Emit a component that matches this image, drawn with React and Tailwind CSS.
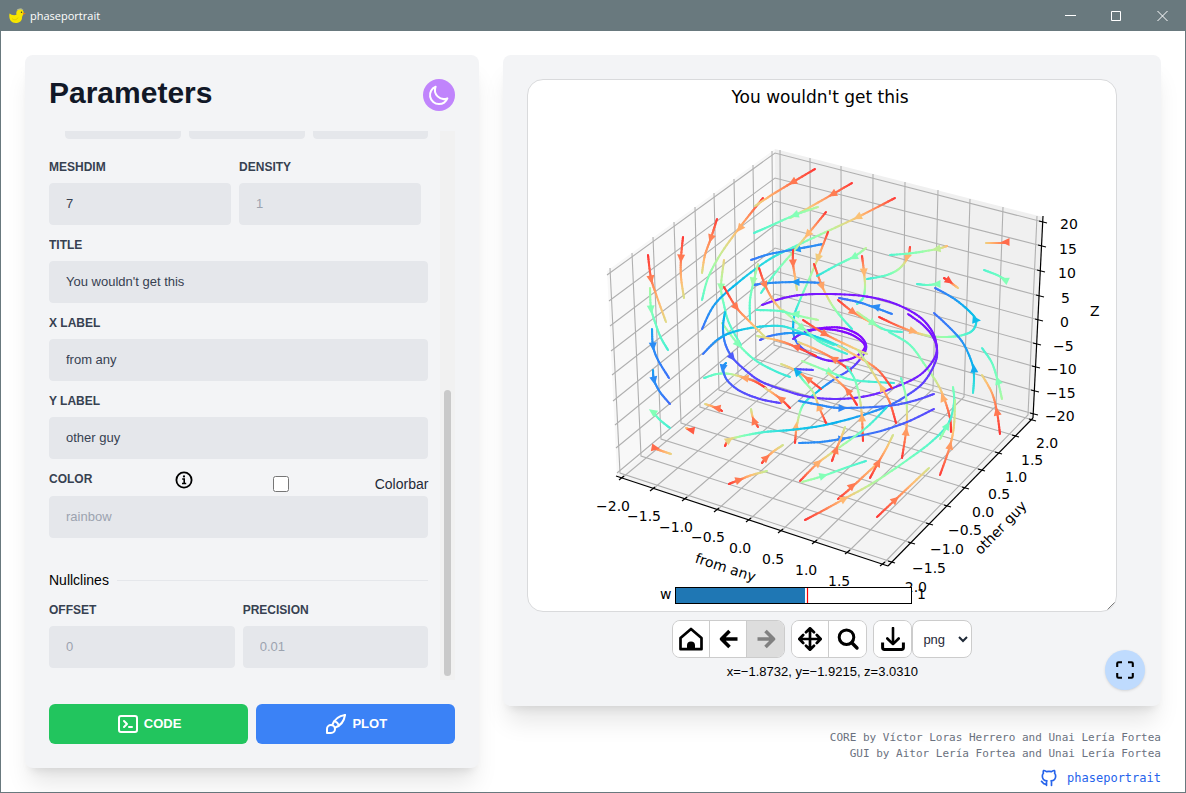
import { TbBrush, TbBrandGithub } from "react-icons/tb";
import { HiOutlineMoon, HiOutlineTerminal } from "react-icons/hi";

/* ---------- 3D stream plot ---------- */

// Speed (0..1) to a rainbow colour, the warm end slightly lightened.
function rainbow(t) {
  const r = Math.min(1, Math.abs(2 * t - 0.5));
  const g = Math.sin(Math.PI * t);
  const b = Math.cos((Math.PI * t) / 2);
  const k = 0.03 + 0.34 * Math.max(0, t - 0.5);
  const lift = (v) => Math.round(255 * (v + (1 - v) * k));
  return `rgb(${lift(r)},${lift(g)},${lift(b)})`;
}

// Streamlines: points are [x, y, speed], the head is [x, y, angle in degrees, speed].
const streams = [
  { p: [[648, 255, 1], [651, 278, 0.9], [657, 297, 0.78], [666, 322, 0.68]], a: [651, 279, 80, 0.87] },
  { p: [[683, 237, 1], [681, 258, 0.88], [681, 277, 0.78], [684, 298, 0.66]], a: [681, 258, 92, 0.88] },
  { p: [[717, 219, 1], [711, 238, 0.86], [705, 255, 0.8], [702, 273, 0.66]], a: [711, 238, 108, 0.86] },
  { p: [[763, 198, 1], [740, 227, 0.77], [720, 255, 0.63], [708, 278, 0.5], [702, 300, 0.42]], a: [740, 228, 128, 0.78] },
  { p: [[650, 288, 0.58], [651, 308, 0.5], [656, 325, 0.45], [661, 338, 0.42], [668, 350, 0.38]], a: [651, 309, 85, 0.5] },
  { p: [[724, 260, 0.72], [721, 287, 0.56], [724, 305, 0.46], [729, 323, 0.42], [741, 345, 0.42]], a: [721, 287, 92, 0.54] },
  { p: [[722, 323, 0.58], [738, 344, 0.5], [755, 360, 0.42], [775, 371, 0.38], [790, 377, 0.36]], a: [738, 344, 48, 0.5] },
  { p: [[895, 198, 1], [858, 217, 0.74], [828, 231, 0.6], [800, 244, 0.45], [770, 259, 0.33], [740, 281, 0.27], [715, 304, 0.21], [702, 329, 0.14]], a: [858, 217, 154, 0.74] },
  { p: [[823, 244, 0.18], [797, 249, 0.18], [770, 254, 0.18], [751, 260, 0.15]], a: [797, 249, 168, 0.2] },
  { p: [[815, 169, 1], [793, 182, 0.9], [770, 196, 0.78], [755, 206, 0.68]], a: [793, 182, 150, 0.88] },
  { p: [[852, 183, 1], [833, 194, 0.88], [803, 211, 0.68], [790, 218, 0.58]], a: [833, 194, 150, 0.87] },
  { p: [[818, 207, 0.62], [795, 215, 0.5], [770, 226, 0.44], [754, 233, 0.4]], a: [795, 215, 160, 0.5] },
  { p: [[826, 212, 1], [808, 234, 0.76], [793, 252, 0.58], [776, 272, 0.45], [761, 293, 0.38]], a: [808, 234, 130, 0.76] },
  { p: [[828, 232, 1], [818, 258, 0.72], [810, 277, 0.55], [800, 300, 0.42], [794, 317, 0.3], [794, 336, 0.18], [802, 348, 0.1], [817, 357, 0.05], [833, 361, 0.02], [853, 358, 0], [865, 347, 0], [856, 337, 0], [840, 331, 0], [820, 329, 0], [803, 333, 0.02], [793, 339, 0.05]], a: [818, 258, 110, 0.72] },
  { p: [[805, 331, 0.03], [822, 328, 0], [842, 328, 0], [860, 336, 0], [866, 349, 0.03], [853, 367, 0.08], [833, 380, 0.14], [817, 392, 0.26], [803, 405, 0.42], [797, 425, 0.72], [795, 443, 1]], a: [796, 427, -85, 0.76] },
  { p: [[793, 250, 1], [793, 263, 0.9], [795, 277, 0.76], [797, 290, 0.65]], a: [793, 263, 88, 0.88] },
  { p: [[823, 283, 0.17], [796, 282, 0.18], [770, 283, 0.18], [753, 285, 0.15]], a: [796, 282, 180, 0.2] },
  { p: [[814, 264, 1], [822, 286, 0.8], [832, 305, 0.6], [842, 318, 0.45], [852, 329, 0.37]], a: [822, 286, 68, 0.8] },
  { p: [[862, 256, 1], [864, 272, 0.76], [865, 287, 0.6], [863, 298, 0.45], [857, 304, 0.38]], a: [864, 272, 86, 0.76] },
  { p: [[866, 248, 0.62], [855, 256, 0.5], [837, 265, 0.42], [817, 276, 0.33]], a: [854, 257, 152, 0.5] },
  { p: [[910, 247, 1], [908, 257, 0.78], [900, 268, 0.6], [887, 275, 0.45], [867, 279, 0.36]], a: [907, 257, 110, 0.77] },
  { p: [[947, 246, 0.78], [937, 249, 0.62], [913, 253, 0.5], [890, 255, 0.4]], a: [937, 249, 170, 0.62] },
  { p: [[986, 243, 0.7], [996, 243, 0.8], [1007, 243, 0.92]], a: [1006, 242, 180, 0.9] },
  { p: [[984, 270, 0.4], [997, 275, 0.45], [1006, 280, 0.5]], a: [1005, 280, 205, 0.5] },
  { p: [[944, 278, 1], [950, 282, 0.92], [958, 288, 0.7]], a: [949, 281, 35, 0.95] },
  { p: [[917, 284, 0.38], [927, 285, 0.44], [938, 284, 0.5]], a: [937, 284, 180, 0.5] },
  { p: [[935, 288, 0.14], [953, 298, 0.19], [968, 310, 0.25], [976, 320, 0.28], [973, 330, 0.35], [963, 335, 0.42], [947, 337, 0.52], [930, 336, 0.6], [914, 332, 0.76], [896, 325, 0.9], [879, 317, 1]], a: [976, 320, 5, 0.26], b: [913, 331, 14, 0.78] },
  { p: [[934, 313, 0.14], [950, 328, 0.16], [963, 343, 0.19], [972, 363, 0.24], [974, 377, 0.3], [973, 393, 0.36]], a: [974, 369, -95, 0.23] },
  { p: [[982, 348, 0.38], [992, 363, 0.44], [998, 382, 0.5], [1002, 399, 0.58]], a: [998, 381, -108, 0.5] },
  { p: [[982, 375, 0.68], [992, 393, 0.8], [997, 412, 0.9], [1000, 434, 1]], a: [997, 412, -102, 0.88] },
  { p: [[839, 298, 0.13], [858, 302, 0.16], [876, 308, 0.18], [892, 314, 0.16]], a: [876, 307, 196, 0.18] },
  { p: [[838, 300, 1], [853, 312, 0.87], [870, 322, 0.75], [882, 329, 0.62]], a: [853, 312, 35, 0.86] },
  { p: [[857, 312, 0.66], [873, 323, 0.5], [886, 330, 0.42], [902, 332, 0.38]], a: [873, 323, 30, 0.52] },
  { p: [[889, 332, 0.42], [910, 345, 0.45], [925, 365, 0.52], [937, 383, 0.65], [944, 398, 0.78], [950, 418, 0.95], [951, 432, 1]], a: [943, 398, -112, 0.78] },
  { p: [[762, 305, 0.03], [780, 299, 0.02], [800, 295, 0.02], [827, 294, 0.02], [863, 296, 0.02], [893, 303, 0.02], [917, 315, 0.02], [930, 328, 0.02], [936, 342, 0.02], [935, 357, 0.03], [920, 375, 0.03], [893, 388, 0.04], [867, 396, 0.04], [837, 399, 0.05], [810, 397, 0.06], [790, 392, 0.07], [762, 382, 0.08], [744, 369, 0.09], [732, 357, 0.11], [725, 343, 0.15], [723, 327, 0.21], [725, 312, 0.28]], a: [732, 357, 52, 0.11] },
  { p: [[908, 314, 0.01], [923, 325, 0.02], [933, 337, 0.02], [937, 349, 0.03], [935, 363, 0.05], [923, 383, 0.07], [903, 398, 0.11], [883, 408, 0.17], [853, 418, 0.22], [820, 426, 0.26], [790, 430, 0.29], [765, 432, 0.38], [742, 436, 0.5], [729, 440, 0.76], [725, 446, 1]], a: [729, 440, -35, 0.7] },
  { p: [[703, 354, 0.14], [717, 340, 0.2], [733, 332, 0.26], [757, 327, 0.3], [780, 326, 0.33], [795, 330, 0.37], [815, 338, 0.4], [834, 345, 0.38]] },
  { p: [[760, 340, 0.1], [770, 336, 0.14], [790, 333, 0.2], [810, 335, 0.27], [830, 342, 0.34], [847, 350, 0.38]] },
  { p: [[759, 268, 1], [765, 285, 0.87], [773, 300, 0.78], [783, 312, 0.66]], a: [765, 285, 65, 0.86] },
  { p: [[783, 310, 0.64], [802, 327, 0.5], [820, 342, 0.42], [847, 354, 0.36]], a: [802, 328, 40, 0.52] },
  { p: [[758, 264, 0.64], [754, 280, 0.52], [750, 300, 0.45], [750, 320, 0.38]], a: [753, 281, 100, 0.55] },
  { p: [[724, 287, 1], [736, 307, 0.88], [747, 319, 0.8], [765, 337, 0.65]], a: [736, 307, 52, 0.88] },
  { p: [[756, 310, 0.4], [780, 311, 0.43], [795, 315, 0.5], [818, 320, 0.6]], a: [796, 314, 188, 0.5] },
  { p: [[652, 329, 0.22], [653, 346, 0.18], [658, 360, 0.17], [669, 378, 0.14]], a: [653, 346, 86, 0.18] },
  { p: [[653, 370, 0.22], [654, 380, 0.18], [660, 392, 0.17], [670, 404, 0.13]], a: [654, 380, 78, 0.18] },
  { p: [[653, 412, 0.5], [660, 420, 0.42], [670, 428, 0.38]], a: [653, 412, 215, 0.5] },
  { p: [[653, 448, 0.92], [662, 451, 0.8], [671, 454, 0.7]], a: [655, 448, 10, 0.9] },
  { p: [[686, 428, 0.7], [691, 430, 0.93]], a: [691, 430, 190, 0.93] },
  { p: [[705, 404, 0.66], [717, 408, 0.88], [722, 411, 0.98]], a: [717, 408, 190, 0.88] },
  { p: [[751, 409, 0.62], [753, 418, 0.76], [758, 427, 0.96]], a: [754, 421, -112, 0.88] },
  { p: [[729, 484, 1], [739, 480, 0.88], [752, 475, 0.75], [767, 471, 0.62]], a: [739, 480, -18, 0.88] },
  { p: [[762, 463, 1], [766, 458, 0.88], [774, 451, 0.75], [783, 445, 0.65]], a: [766, 458, -42, 0.88] },
  { p: [[704, 378, 0.4], [717, 374, 0.45], [730, 374, 0.56], [745, 378, 0.8], [756, 382, 0.92], [766, 388, 1]], a: [745, 378, 190, 0.8] },
  { p: [[726, 363, 0.22], [723, 368, 0.17], [727, 380, 0.12], [740, 391, 0.1], [760, 399, 0.08], [780, 403, 0.08]], a: [723, 368, 100, 0.18] },
  { p: [[757, 336, 0.62], [780, 341, 0.8], [796, 347, 0.92], [816, 356, 1]], a: [796, 347, 196, 0.9] },
  { p: [[765, 388, 0.65], [774, 394, 0.8], [782, 400, 0.9], [790, 408, 1]], a: [781, 399, 216, 0.86] },
  { p: [[794, 369, 0.1], [813, 370, 0.08]] },
  { p: [[781, 364, 0.65], [795, 370, 0.75], [808, 379, 0.88], [821, 389, 1]], a: [808, 379, 214, 0.86] },
  { p: [[795, 369, 0.25], [803, 380, 0.45], [813, 392, 0.6], [819, 407, 0.78], [826, 423, 1]], a: [819, 407, -110, 0.78], b: [797, 372, -130, 0.24] },
  { p: [[802, 361, 0.58], [830, 372, 0.48], [853, 380, 0.42], [894, 383, 0.34]], a: [830, 372, 22, 0.5] },
  { p: [[828, 373, 0.65], [838, 381, 0.78], [848, 391, 0.88], [857, 405, 1]], a: [848, 391, -130, 0.87] },
  { p: [[798, 342, 0.66], [815, 349, 0.78], [834, 359, 0.9], [851, 371, 1]], a: [834, 359, 206, 0.86] },
  { p: [[803, 320, 1], [825, 334, 0.88], [847, 345, 0.75], [867, 354, 0.65]], a: [825, 334, 30, 0.88] },
  { p: [[838, 346, 0.68], [860, 358, 0.76], [878, 370, 0.88], [892, 388, 1]] },
  { p: [[847, 367, 0.35], [855, 380, 0.45], [860, 400, 0.62], [862, 418, 0.78], [863, 441, 1]], a: [862, 418, -93, 0.78] },
  { p: [[858, 350, 0.6], [870, 368, 0.66], [882, 388, 0.74], [890, 403, 0.88], [896, 423, 1]], a: [882, 388, -118, 0.74] },
  { p: [[901, 378, 0.42], [906, 397, 0.55], [907, 417, 0.7], [906, 432, 0.82], [902, 458, 1]], a: [906, 432, -84, 0.82] },
  { p: [[799, 401, 0.18], [820, 405, 0.18], [841, 408, 0.17], [887, 406, 0.13], [913, 401, 0.1], [934, 394, 0.08]], a: [842, 408, 2, 0.17] },
  { p: [[799, 443, 0.18], [820, 442, 0.18], [841, 439, 0.17], [877, 432, 0.14], [907, 422, 0.11], [934, 409, 0.08]], a: [842, 439, -8, 0.17] },
  { p: [[800, 481, 1], [818, 463, 0.78], [840, 447, 0.6], [867, 427, 0.42], [887, 407, 0.3]], a: [818, 463, -42, 0.78] },
  { p: [[802, 482, 0.6], [823, 476, 0.5], [845, 468, 0.44], [866, 461, 0.38]], a: [823, 476, -16, 0.5] },
  { p: [[832, 461, 1], [836, 450, 0.88], [841, 438, 0.76], [845, 427, 0.64]], a: [836, 450, -70, 0.87] },
  { p: [[838, 499, 1], [852, 487, 0.88], [866, 474, 0.8], [878, 463, 0.74]], a: [852, 486, -42, 0.88] },
  { p: [[870, 478, 1], [878, 463, 0.88], [886, 449, 0.76], [893, 435, 0.65]], a: [878, 463, -62, 0.87] },
  { p: [[805, 520, 1], [824, 510, 0.88], [844, 499, 0.76], [873, 483, 0.6], [903, 463, 0.48], [930, 443, 0.42], [948, 424, 0.36], [954, 403, 0.42], [953, 387, 0.5]], a: [844, 499, -29, 0.76] },
  { p: [[877, 517, 1], [895, 500, 0.88], [912, 484, 0.76], [929, 468, 0.65]], a: [895, 500, -42, 0.87] },
  { p: [[940, 475, 1], [950, 446, 0.82], [954, 425, 0.7], [955, 400, 0.58]], a: [950, 446, -78, 0.82] },
  { p: [[940, 439, 0.58], [948, 424, 0.46]], a: [947, 426, -60, 0.46] },
];

// Catmull-Rom samples through the control points, speed interpolated alongside.
function sample(pts) {
  const out = [];
  const n = 8;
  for (let i = 0; i < pts.length - 1; i++) {
    const a = pts[Math.max(0, i - 1)];
    const b = pts[i];
    const c = pts[i + 1];
    const d = pts[Math.min(pts.length - 1, i + 2)];
    for (let k = 0; k < n; k++) {
      const t = k / n;
      const f = (j) =>
        0.5 * (2 * b[j] + (c[j] - a[j]) * t + (2 * a[j] - 5 * b[j] + 4 * c[j] - d[j]) * t * t + (3 * b[j] - a[j] - 3 * c[j] + d[j]) * t * t * t);
      out.push([f(0), f(1), b[2] + (c[2] - b[2]) * t]);
    }
  }
  out.push(pts[pts.length - 1]);
  return out;
}

function Head({ at }) {
  return (
    <path d="M5 0L-3.500 4V-4Z" fill={rainbow(at[3])} transform={`translate(${at[0]} ${at[1]}) rotate(${at[2]})`} />
  );
}

function Stream({ s }) {
  const q = sample(s.p);
  return (
    <g>
      {q.slice(1).map((c, i) => (
        <line key={i} x1={q[i][0]} y1={q[i][1]} x2={c[0]} y2={c[1]} stroke={rainbow((q[i][2] + c[2]) / 2)} strokeWidth="2.1" strokeLinecap="round" />
      ))}
      {s.a && <Head at={s.a} />}
      {s.b && <Head at={s.b} />}
    </g>
  );
}

const leftTop = [[610, 268], [632, 253], [653, 237], [674, 222], [695, 207], [714, 193], [734, 179], [753, 165], [772, 151]];
const leftBottom = [[620, 473], [641, 456], [661, 439], [681, 423], [700, 407], [719, 390], [738, 375], [756, 359], [774, 345]];
const rightTop = [[780, 150], [810, 158], [841, 166], [873, 174], [905, 182], [938, 190], [970, 199], [1003, 207], [1037, 216]];
const rightBottom = [[781, 346], [811, 355], [842, 363], [872, 372], [903, 380], [933, 389], [964, 397], [996, 406], [1028, 415]];
const xTicks = [[622, 478], [653, 489], [685, 499], [717, 510], [749, 520], [781, 531], [815, 542], [848, 552], [883, 564]];
const yTicks = [[892, 562], [912, 543], [930, 524], [948, 506], [966, 488], [982, 470], [999, 453], [1016, 436], [1033, 420]];
const zLeft = [[607, 275], [609, 301], [610, 326], [611, 351], [612, 375], [613, 401], [615, 425], [616, 448], [617, 473]];
const zBack = [153, 178, 201, 225, 248, 271, 294, 317, 341];
const zTicks = [[1043, 222], [1042, 246], [1041, 271], [1040, 296], [1039, 320], [1037, 344], [1036, 367], [1035, 391], [1034, 414]];

const tickLabels = [
  ["−2.0", 596, 511], ["−1.5", 627, 521], ["−1.0", 659, 532], ["−0.5", 691, 542], ["0.0", 729, 553], ["0.5", 762, 564], ["1.0", 795, 575], ["1.5", 828, 586], ["2.0", 862, 598],
  ["2.0", 1036, 448], ["1.5", 1021, 465], ["1.0", 1005, 482], ["0.5", 988, 499], ["0.0", 972, 517], ["−0.5", 948, 535], ["−1.0", 930, 554], ["−1.5", 912, 573], ["−2.0", 893, 592],
  ["20", 1060, 229], ["15", 1059, 254], ["10", 1058, 278], ["5", 1061, 303], ["0", 1060, 327], ["−5", 1053, 351], ["−10", 1047, 374], ["−15", 1046, 398], ["−20", 1045, 421],
];

function Plot() {
  return (
    <svg viewBox="528 80 588 531" className="block h-auto w-full font-['DejaVu_Sans',sans-serif] text-[14px]" role="img" aria-label="Phase portrait">
      <polygon points="607,271 775,149 776,342 617,476" fill="#f8f8f8" />
      <polygon points="775,149 1043,217 1033,418 776,342" fill="#f0f0f0" />
      <polygon points="617,476 776,342 1033,418 888,566" fill="#f4f4f4" />
      <g stroke="#b0b0b0" strokeWidth="1.1" fill="none">
        {leftTop.map((p, i) => (
          <polyline key={i} points={`${p} ${leftBottom[i]} ${yTicks[i]}`} />
        ))}
        {rightTop.map((p, i) => (
          <polyline key={i} points={`${p} ${rightBottom[i]} ${xTicks[i]}`} />
        ))}
        {zLeft.map((p, i) => (
          <polyline key={i} points={`${p} 775,${zBack[i]} ${zTicks[i]}`} />
        ))}
      </g>
      <g stroke="#000" strokeWidth="1.2">
        <line x1="616" y1="476" x2="888" y2="566" />
        <line x1="888" y1="566" x2="1033" y2="418" />
        <line x1="1033" y1="418" x2="1043" y2="216" />
        {xTicks.map(([x, y], i) => (
          <line key={i} x1={x - 3} y1={y + 2} x2={x + 2} y2={y - 2} />
        ))}
        {yTicks.map(([x, y], i) => (
          <line key={i} x1={x - 4} y1={y - 1} x2={x + 3} y2={y + 1} />
        ))}
        {zTicks.map(([x, y], i) => (
          <line key={i} x1={x - 4} y1={y - 1} x2={x + 4} y2={y + 1} />
        ))}
      </g>
      {streams.map((s, i) => (
        <Stream key={i} s={s} />
      ))}
      {tickLabels.map(([t, x, y], i) => (
        <text key={i} x={x} y={y}>{t}</text>
      ))}
      <text x="1090" y="316">Z</text>
      <text textAnchor="middle" transform="translate(724 572) rotate(18)">from any</text>
      <text textAnchor="middle" transform="translate(1004 531) rotate(-46)">other guy</text>
      <text x="820" y="103" textAnchor="middle" fontSize="17">You wouldn't get this</text>
      <rect x="675.500" y="587.500" width="236" height="16" fill="#fff" />
      <rect x="675.500" y="587.500" width="129.500" height="16" fill="#1f77b4" />
      <line x1="807.500" y1="587" x2="807.500" y2="604" stroke="#f00" strokeWidth="1.2" />
      <rect x="675.500" y="587.500" width="236" height="16" fill="none" stroke="#000" />
      <text x="660" y="599">w</text>
      <text x="917" y="599">1</text>
    </svg>
  );
}

/* ---------- icons ---------- */

function DuckIcon() {
  return (
    <svg viewBox="0 0 17 16" className="h-4 w-[17px]" aria-hidden="true">
      <path d="M.5 5.500C2 6.500 4.500 8 7.500 6.800C6.700 4 8 1.500 11 1.300C14 1.200 15 3.500 14.500 5.500C14 7.500 13 8 13 10C13 13 10 15 6.500 15C2 15-.5 11 .5 5.500Z" fill="#f7e600" />
      <path d="M7.500 2.500C8.500.3 12.500-.4 14.500 2C12 1.300 9.500 1.500 7.500 2.500Z" fill="#c9c9a0" />
      <path d="M13.800 4.500L17 5.500L14 6.800Z" fill="#f0761a" />
      <circle cx="12.500" cy="4.300" r=".7" fill="#333" />
      <path d="M3 10.500C5 12.500 8 12 9 9.500" fill="none" stroke="#d9c400" strokeWidth=".8" />
    </svg>
  );
}

function InfoIcon() {
  return (
    <svg viewBox="0 0 18 18" className="h-[18px] w-[18px]" fill="none" stroke="#000" aria-hidden="true">
      <circle cx="9" cy="9" r="7.600" strokeWidth="1.800" />
      <path d="M7.200 8H9.200V12.500M7 12.500H11.200" strokeWidth="1.600" />
      <circle cx="9" cy="5.400" r="1.100" fill="#000" stroke="none" />
    </svg>
  );
}

function HomeIcon() {
  return (
    <svg viewBox="0 0 24 24" className="h-6 w-6" aria-hidden="true">
      <path d="M1.500 11L12 2L22.500 11V22.200H1.500Z" fill="none" stroke="#000" strokeWidth="2.700" strokeLinejoin="round" />
      <path d="M8 22V18.500A4 4 0 0 1 16 18.500V22Z" fill="#000" />
    </svg>
  );
}

function ArrowIcon({ right }) {
  return (
    <svg viewBox="0 0 24 24" className="h-6 w-6" fill="none" stroke="currentColor" strokeWidth="3.600" strokeLinejoin="round" aria-hidden="true">
      {right ? <path d="M3.500 12H19M11.500 4L19.500 12L11.500 20" /> : <path d="M21.500 12H6M13.500 4L5.500 12L13.500 20" />}
    </svg>
  );
}

function MoveIcon() {
  return (
    <svg viewBox="0 0 24 24" className="h-6 w-6" fill="none" stroke="#000" strokeWidth="2.700" strokeLinecap="round" strokeLinejoin="round" aria-hidden="true">
      <path d="M12 2V22M2 12H22M8 5.200L12 1.300L16 5.200M8 18.800L12 22.700L16 18.800M5.200 8L1.300 12L5.200 16M18.800 8L22.700 12L18.800 16" />
    </svg>
  );
}

function ZoomIcon() {
  return (
    <svg viewBox="0 0 24 24" className="h-6 w-6" fill="none" stroke="#000" aria-hidden="true">
      <circle cx="10.500" cy="10.200" r="7.300" strokeWidth="3" />
      <path d="M15.800 15.800L21 21" strokeWidth="3.400" strokeLinecap="round" />
    </svg>
  );
}

function SaveIcon() {
  return (
    <svg viewBox="0 0 24 24" className="h-6 w-6" fill="none" stroke="#000" strokeLinejoin="round" aria-hidden="true">
      <path d="M12 1V17M6.300 11.500L12 17.200L17.700 11.500" strokeWidth="2.600" strokeLinecap="round" />
      <path d="M1.600 15.500V20.500Q1.600 22.400 3.500 22.400H20.500Q22.400 22.400 22.400 20.500V15.500" strokeWidth="3" />
    </svg>
  );
}

function ExpandIcon() {
  return (
    <svg viewBox="0 0 20 20" className="h-5 w-5" fill="none" stroke="#000" strokeWidth="2.100" aria-hidden="true">
      <path d="M2.200 7V3.500Q2.200 2.200 3.500 2.200H7M13 2.200H16.500Q17.800 2.200 17.800 3.500V7M17.800 13V16.500Q17.800 17.800 16.500 17.800H13M7 17.800H3.500Q2.200 17.800 2.200 16.500V13" />
    </svg>
  );
}

/* ---------- form ---------- */

const inputClass = "block h-[42px] w-full rounded border border-[#e5e7eb] bg-[#e5e7eb] px-4 pb-0.5 text-[13px] text-[#374151] placeholder-[#9ca3af] outline-none";
const labelClass = "mb-2 block text-xs font-bold uppercase text-[#374151]";

function Field({ id, label, value, placeholder, className = "" }) {
  return (
    <div className={className}>
      <label htmlFor={id} className={labelClass}>{label}</label>
      <input id={id} type="text" defaultValue={value} placeholder={placeholder} className={inputClass} />
    </div>
  );
}

function Parameters() {
  return (
    <section className="flex w-2/5 flex-col rounded-lg bg-[#f3f4f6] p-6 shadow-xl">
      <div className="flex h-[52px] shrink-0 items-start justify-between">
        <h1 className="text-[30px] leading-7 font-bold text-[#111827]">Parameters</h1>
        <button type="button" aria-label="Dark mode" className="flex h-8 w-8 items-center justify-center rounded-full bg-[#c084fc] text-white">
          <HiOutlineMoon className="h-6 w-6" />
        </button>
      </div>
      <div className="flex min-h-0 flex-1">
        <form className="flex min-w-0 flex-1 flex-col justify-end overflow-hidden pr-3 pb-3">
          <div className="mb-5 grid shrink-0 grid-cols-3 gap-2 pl-4">
            <input aria-label="Minimum" className={inputClass} />
            <input aria-label="Maximum" className={inputClass} />
            <input aria-label="Steps" className={inputClass} />
          </div>
          <div className="mb-3 flex shrink-0 gap-2">
            <Field id="meshdim" label="Meshdim" value="7" className="w-[48%]" />
            <Field id="density" label="Density" placeholder="1" className="w-[48%]" />
          </div>
          <Field id="title" label="Title" value="You wouldn't get this" className="mb-3 shrink-0" />
          <Field id="xlabel" label="X label" value="from any" className="mb-3 shrink-0" />
          <Field id="ylabel" label="Y label" value="other guy" className="mb-3 shrink-0" />
          <div className="mb-8 shrink-0">
            <div className="flex h-[25px] items-start justify-between">
              <div className="flex w-36 items-start justify-between">
                <label htmlFor="color" className="text-xs font-bold text-[#374151] uppercase">Color</label>
                <button type="button" aria-label="Color help" className="flex"><InfoIcon /></button>
              </div>
              <div className="flex h-[25px] w-[155px] items-center justify-between">
                <input id="colorbar" type="checkbox" className="h-4 w-4" />
                <label htmlFor="colorbar" className="text-sm text-[#1f2937]">Colorbar</label>
              </div>
            </div>
            <input id="color" type="text" placeholder="rainbow" className={inputClass} />
          </div>
          <div className="mb-3 flex shrink-0 items-center gap-2">
            <h2 className="text-sm text-black">Nullclines</h2>
            <hr className="flex-1 border-[#e5e7eb]" />
          </div>
          <div className="grid shrink-0 grid-cols-2 gap-2">
            <Field id="offset" label="Offset" placeholder="0" />
            <Field id="precision" label="Precision" placeholder="0.01" />
          </div>
        </form>
        <div className="flex w-[15px] shrink-0 flex-col items-center justify-end bg-[#f1f1f1] pb-1">
          <div className="h-[286px] w-[7px] rounded-full bg-[#c9c9c9]" />
        </div>
      </div>
      <div className="mt-6 grid shrink-0 grid-cols-2 gap-2 text-[13px] font-bold text-white">
        <button type="button" className="flex h-10 items-center justify-center gap-1 rounded-md bg-[#22c55e]">
          <HiOutlineTerminal className="h-6 w-6" />CODE
        </button>
        <button type="button" className="flex h-10 items-center justify-center gap-1 rounded-md bg-[#3b82f6]">
          <TbBrush className="h-6 w-6" />PLOT
        </button>
      </div>
    </section>
  );
}

function ToolButton({ label, disabled, children }) {
  return (
    <button type="button" aria-label={label} disabled={disabled} className="flex h-9 w-[37px] items-center justify-center bg-white text-black disabled:bg-[#dddddd] disabled:text-[#808080]">
      {children}
    </button>
  );
}

function Group({ children }) {
  return <div className="flex divide-x divide-[#cccccc] overflow-hidden rounded-lg border border-[#cccccc]">{children}</div>;
}

function Viewer() {
  return (
    <section className="relative rounded-lg bg-[#f3f4f6] p-6 shadow-xl">
      <div className="flex w-[590px] max-w-full flex-col items-center">
        <div className="relative w-full overflow-hidden rounded-2xl border border-[#d9dadc] bg-white">
          <Plot />
          <svg viewBox="0 0 10 10" className="absolute right-0 bottom-0 h-[10px] w-[10px]" stroke="#555" strokeWidth=".8" aria-hidden="true">
            <path d="M1 9L9 1M5 9L9 5" />
          </svg>
        </div>
        <div className="mt-2 flex">
          <Group>
            <ToolButton label="Home"><HomeIcon /></ToolButton>
            <ToolButton label="Back"><ArrowIcon /></ToolButton>
            <ToolButton label="Forward" disabled><ArrowIcon right /></ToolButton>
          </Group>
          <div className="ml-1.5 flex">
            <Group>
              <ToolButton label="Pan"><MoveIcon /></ToolButton>
              <ToolButton label="Zoom"><ZoomIcon /></ToolButton>
            </Group>
          </div>
          <div className="ml-1.5 flex">
            <Group>
              <ToolButton label="Download"><SaveIcon /></ToolButton>
            </Group>
            <select aria-label="Format" className="w-[60px] rounded-lg border border-[#cccccc] bg-white pl-1.5 text-[13px] text-[#1f2937]">
              <option>png</option>
              <option>pdf</option>
              <option>svg</option>
            </select>
          </div>
        </div>
        <p className="mt-1 text-[13px] leading-5 text-black">x=−1.8732, y=−1.9215, z=3.0310</p>
      </div>
      <button type="button" aria-label="Full screen" className="absolute right-4 bottom-4 flex h-10 w-10 items-center justify-center rounded-full bg-[#bfdbfe] shadow">
        <ExpandIcon />
      </button>
    </section>
  );
}

function TitleBar() {
  return (
    <header className="flex h-[30px] shrink-0 items-center bg-[#69797e] pl-2 text-white">
      <DuckIcon />
      <span className="ml-1 flex-1 font-['Open_Sans',sans-serif] text-[11px]">phaseportrait</span>
      <button type="button" aria-label="Minimize" className="flex h-full w-[46px] items-center justify-center">
        <svg viewBox="0 0 11 11" className="h-[11px] w-[11px]" stroke="#fff"><path d="M0 4.500H11" /></svg>
      </button>
      <button type="button" aria-label="Maximize" className="flex h-full w-[46px] items-center justify-center">
        <svg viewBox="0 0 11 11" className="h-[11px] w-[11px]" stroke="#fff" fill="none"><path d="M.5.5H9.500V9.500H.5Z" /></svg>
      </button>
      <button type="button" aria-label="Close" className="flex h-full w-[46px] items-center justify-center">
        <svg viewBox="0 0 11 11" className="h-[11px] w-[11px]" stroke="#fff"><path d="M.5 0L10.500 10M10.500 0L.5 10" /></svg>
      </button>
    </header>
  );
}

export default function App() {
  return (
    <div className="flex h-screen min-h-[600px] flex-col border border-[#69797e] bg-white font-['Liberation_Sans',Arial,sans-serif]">
      <TitleBar />
      <main className="flex min-h-0 flex-1 p-6">
        <Parameters />
        <div className="w-3/5 pl-6">
          <Viewer />
          <footer className="mt-6 text-right font-['DejaVu_Sans_Mono',monospace] text-[11px] leading-4 text-[#6b7280]">
            <p>CORE by Víctor Loras Herrero and Unai Lería Fortea</p>
            <p>GUI by Aitor Lería Fortea and Unai Lería Fortea</p>
            <a href="#github" className="mt-1.5 inline-flex items-center gap-2 text-xs text-[#2563eb]">
              <TbBrandGithub className="h-5 w-5" />phaseportrait
            </a>
          </footer>
        </div>
      </main>
    </div>
  );
}
